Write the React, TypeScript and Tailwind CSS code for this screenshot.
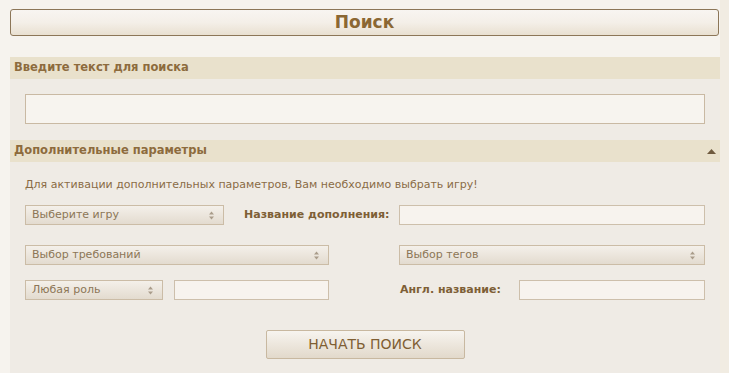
import React from "react";

const font = { fontFamily: '"DejaVu Sans", Tahoma, Verdana, sans-serif' };

const Arrows = () => (
  <svg width="7" height="9" viewBox="0 0 7 9" className="shrink-0">
    <path d="M3.5 0.5 L6 3.5 L1 3.5 Z" fill="#a99c8a" />
    <path d="M3.5 8.5 L6 5.5 L1 5.5 Z" fill="#a99c8a" />
  </svg>
);

const Select = ({ label, className }: { label: string; className: string }) => (
  <div
    className={
      "flex items-center justify-between h-[20px] pl-[6px] pr-[8px] border border-[#cbbca6] bg-gradient-to-b from-[#f4f0ea] to-[#e3dbcf] text-[11px] text-[#8c7656] " +
      className
    }
  >
    <span>{label}</span>
    <Arrows />
  </div>
);

const Field = ({ className }: { className: string }) => (
  <div className={"h-[20px] border border-[#cdbfab] bg-[#f7f3ee] " + className} />
);

const Bar = ({ title, arrow }: { title: string; arrow?: boolean }) => (
  <div className="flex items-center justify-between h-[22px] pl-[4px] pr-[4px] bg-[#e9e1cc]">
    <span className="text-[11.5px] font-bold text-[#8d6b3d]">{title}</span>
    {arrow && (
      <svg width="9" height="5" viewBox="0 0 9 5">
        <path d="M4.5 0 L9 5 L0 5 Z" fill="#6f5a3e" />
      </svg>
    )}
  </div>
);

export default function App() {
  return (
    <div className="w-[729px] h-[373px] overflow-hidden bg-[#f6f3ee] flex" style={font}>
      <div className="w-[720px] shrink-0">
        <div className="ml-[10px] mt-[9px] w-[709px] h-[27px] rounded-[3px] border border-[#8c7658] bg-gradient-to-b from-[#f8f5f1] via-[#f4efe8] to-[#e9e0d1] flex items-center justify-center">
          <span className="text-[17px] font-bold text-[#8b6733]">Поиск</span>
        </div>

        <div className="ml-[10px] mt-[21px] w-[710px] h-[400px] bg-[#efebe5]">
          <Bar title="Введите текст для поиска" />
          <div className="pl-[15px] pt-[15px] pb-[16px]">
            <div className="w-[680px] h-[30px] border border-[#c9b9a3] bg-[#f7f4ef]" />
          </div>
          <Bar title="Дополнительные параметры" arrow />

          <div className="pl-[15px] pt-[15px] text-[11px] text-[#8a6b45] leading-[15px]">
            Для активации дополнительных параметров, Вам необходимо выбрать игру!
          </div>

          <div className="flex items-center pl-[15px] mt-[13px]">
            <Select label="Выберите игру" className="w-[199px]" />
            <span className="ml-[20px] w-[135px] text-[11px] font-bold text-[#7e5f36] whitespace-nowrap">
              Название дополнения:
            </span>
            <Field className="w-[306px] ml-[20px]" />
          </div>

          <div className="flex items-center pl-[15px] mt-[20px]">
            <Select label="Выбор требований" className="w-[304px]" />
            <Select label="Выбор тегов" className="w-[306px] ml-[70px]" />
          </div>

          <div className="flex items-center pl-[15px] mt-[15px]">
            <Select label="Любая роль" className="w-[138px]" />
            <Field className="w-[155px] ml-[11px]" />
            <span className="ml-[71px] w-[119px] text-[11px] font-bold text-[#7e5f36] whitespace-nowrap">
              Англ. название:
            </span>
            <Field className="w-[186px]" />
          </div>

          <div className="flex justify-center mt-[30px]">
            <button
              className="w-[199px] h-[29px] border border-[#c8b8a0] rounded-[2px] bg-gradient-to-b from-[#f7f4ef] to-[#e2d9cb] text-[14px] text-[#7f5e33]"
              style={font}
            >
              НАЧАТЬ ПОИСК
            </button>
          </div>
        </div>
      </div>
      <div className="flex-1 bg-[#f1ece2]" />
    </div>
  );
}
